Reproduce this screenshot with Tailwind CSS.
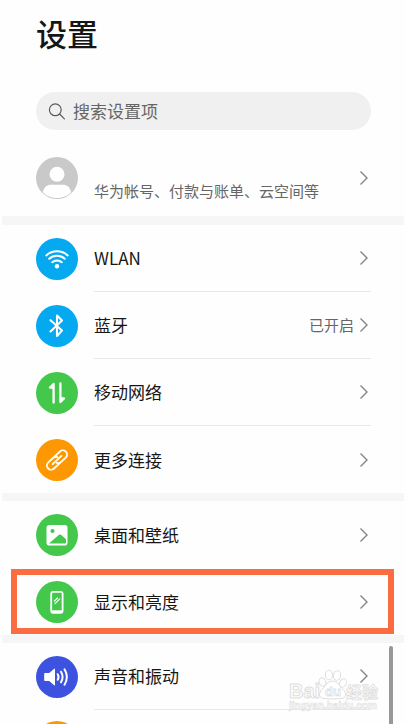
<!DOCTYPE html>
<html lang="zh-CN">
<head>
<meta charset="utf-8">
<meta name="viewport" content="width=device-width, initial-scale=1">
<title>设置</title>
<script src="https://cdn.jsdelivr.net/npm/@tailwindcss/browser@4"></script>
</head>
<body class="bg-white">
<svg class="hidden" aria-hidden="true">
  <symbol id="chevron" viewBox="0 0 10 16"><path d="M1.5 1.5 8 8l-6.5 6.5" fill="none" stroke="#858585" stroke-width="1.4"/></symbol>
</svg>
<div class="relative h-screen overflow-hidden bg-[#fefefe] text-[17px] text-[#161616] font-['Noto_Sans_CJK_SC',sans-serif]">
  <header class="pt-[11px] pl-9 pr-[35px]">
    <h1 class="text-[31px] leading-[44px] font-medium">设置</h1>
    <label class="mt-[37px] flex h-[38px] items-center gap-[7px] rounded-full bg-[#f0f0f0] pl-3">
      <svg class="size-[18px] shrink-0" viewBox="0 0 18 18" fill="none" stroke="#5c5c5c" stroke-width="1.2" stroke-linecap="round" aria-hidden="true"><circle cx="7.3" cy="7.8" r="5.900"/><path d="m11.600 12 4.800 4.800"/></svg>
      <input type="search" aria-label="搜索设置项" placeholder="搜索设置项" class="min-w-0 flex-1 bg-transparent outline-none placeholder:text-[#666]">
    </label>
  </header>
  <main>
    <a href="#account" class="mt-[10px] flex h-[76px] items-center pl-9 pr-[35px]">
      <svg class="size-[42px] shrink-0" viewBox="0 0 42 42" aria-hidden="true"><circle cx="21" cy="21" r="21" fill="#c9c9c9"/><circle cx="21" cy="17.3" r="7.5" fill="#fff"/><path d="M6.8 35.2c1.2-5 4-7.4 8.4-7.4h11.6c4.400 0 7.200 2.400 8.400 7.400A20 20 0 0 1 21 41a20 20 0 0 1-14.200-5.800Z" fill="#fff"/></svg>
      <span class="ml-4 flex-1 pt-[26px] text-[15px] text-[#666]">华为帐号、付款与账单、云空间等</span>
      <svg class="mr-[2px] h-4 w-[10px]"><use href="#chevron"/></svg>
    </a>
    <nav class="mx-[2px] border-t-9 border-[#f6f6f6] pl-[34px] pr-[33px]">
      <a href="#wlan" class="flex h-[67px] items-center">
        <svg class="size-[42px] shrink-0" viewBox="0 0 42 42" aria-hidden="true"><circle cx="21" cy="21" r="21" fill="#05a9f0"/><g fill="none" stroke="#fff" stroke-width="2" stroke-linecap="round"><path d="M10.300 17.400a15.800 15.800 0 0 1 21.400 0"/><path d="M13.200 20.800a11.700 11.700 0 0 1 15.600 0"/><path d="M16.200 24.200a7.300 7.300 0 0 1 9.600 0"/></g><circle cx="21" cy="28.200" r="2.200" fill="#fff"/></svg>
        <span class="ml-4 flex h-full flex-1 items-center justify-between border-b border-[#e8e8e8] pr-[2px]">WLAN<svg class="h-4 w-[10px]"><use href="#chevron"/></svg></span>
      </a>
      <a href="#bluetooth" class="flex h-[67px] items-center">
        <svg class="size-[42px] shrink-0" viewBox="0 0 42 42" aria-hidden="true"><circle cx="21" cy="21" r="21" fill="#05a9f0"/><path d="m14.500 15.200 11.500 10.300-5 5.500V10.500l5 5L14.500 26.500" fill="none" stroke="#fff" stroke-width="2.100" stroke-linecap="round" stroke-linejoin="round"/></svg>
        <span class="ml-4 flex h-full flex-1 items-center border-b border-[#e8e8e8] pr-[2px]">蓝牙<span class="mr-[5px] ml-auto text-[15px] text-[#666]">已开启</span><svg class="h-4 w-[10px]"><use href="#chevron"/></svg></span>
      </a>
      <a href="#mobile" class="flex h-[67px] items-center">
        <svg class="size-[42px] shrink-0" viewBox="0 0 42 42" aria-hidden="true"><circle cx="21" cy="21" r="21" fill="#43c84b"/><path d="M17.600 30.500V12l-3.600 3.500h3M24.400 11.500V30l3.600-3.500h-3" fill="none" stroke="#fff" stroke-width="2.300" stroke-linecap="round" stroke-linejoin="round"/></svg>
        <span class="ml-4 flex h-full flex-1 items-center justify-between border-b border-[#e8e8e8] pr-[2px]">移动网络<svg class="h-4 w-[10px]"><use href="#chevron"/></svg></span>
      </a>
      <a href="#connections" class="flex h-[67px] items-center">
        <svg class="size-[42px] shrink-0" viewBox="0 0 42 42" aria-hidden="true"><circle cx="21" cy="21" r="21" fill="#fd9803"/><g transform="rotate(-43 21 21)" fill="none" stroke="#fff" stroke-width="1.900" stroke-linecap="round"><path d="M20.500 25.200H13a4.200 4.200 0 0 1 0-8.400h6.500a4.200 4.200 0 0 1 3.700 2.200"/><path d="M21.500 16.800H29a4.200 4.200 0 0 1 0 8.400h-6.500a4.200 4.200 0 0 1-3.700-2.200"/><path d="M15 21h12"/></g></svg>
        <span class="ml-4 flex h-full flex-1 items-center justify-between pr-[2px]">更多连接<svg class="h-4 w-[10px]"><use href="#chevron"/></svg></span>
      </a>
    </nav>
    <nav class="mx-[2px] border-t-8 border-[#f6f6f6] pl-[34px] pr-[33px]">
      <a href="#wallpaper" class="flex h-[67px] items-center">
        <svg class="size-[42px] shrink-0" viewBox="0 0 42 42" aria-hidden="true"><circle cx="21" cy="21" r="21" fill="#43c84b"/><rect x="10.500" y="11" width="21" height="20.500" rx="2.800" fill="#fff"/><circle cx="16.500" cy="17" r="2.100" fill="#43c84b"/><path d="m13 29.500 10-8.700q1-.8 2 0l5 4.500v3.200q0 1-1 1Z" fill="#43c84b"/></svg>
        <span class="ml-4 flex h-full flex-1 items-center justify-between pr-[2px]">桌面和壁纸<svg class="h-4 w-[10px]"><use href="#chevron"/></svg></span>
      </a>
      <a href="#display" class="relative flex h-[67px] items-center">
        <svg class="size-[42px] shrink-0" viewBox="0 0 42 42" aria-hidden="true"><circle cx="21" cy="21" r="21" fill="#43c84b"/><rect x="15.200" y="10.800" width="11.400" height="21" rx="2" fill="none" stroke="#fff" stroke-width="1.800"/><path d="M15.200 30.500h11.400" stroke="#fff" stroke-width="2.400"/><path d="m18.300 20.200 3.200-3.200m-2.500 5.600 4.800-4.800" stroke="#fff" stroke-width="1.200" stroke-linecap="round"/></svg>
        <span class="ml-4 flex h-full flex-1 items-center justify-between pr-[2px]">显示和亮度<svg class="h-4 w-[10px]"><use href="#chevron"/></svg></span>
        <span class="absolute -left-[25px] -right-[23px] top-px bottom-px border-[6px] border-[#fb6c41]"></span>
      </a>
    </nav>
    <nav class="mx-[2px] border-t-8 border-[#f6f6f6] pl-[34px] pr-[33px]">
      <a href="#sound" class="flex h-[67px] items-center">
        <svg class="size-[42px] shrink-0" viewBox="0 0 42 42" aria-hidden="true"><circle cx="21" cy="21" r="21" fill="#3d53e0"/><path d="M9 17h4.200l5-4.300q.8-.6.800.4v15.800q0 1-.8.400l-5-4.300H9q-.8 0-.8-.8v-6.400q0-.8.800-.8Z" fill="#fff"/><g fill="none" stroke="#fff" stroke-width="2" stroke-linecap="round"><path d="M21.700 18.200q1.700 2.800 0 5.600M25 15.700q3.200 5.300 0 10.600M28.500 13.300q4.700 7.700 0 15.400"/></g></svg>
        <span class="ml-4 flex h-full flex-1 items-center justify-between border-b border-[#e8e8e8] pr-[2px]">声音和振动<svg class="h-4 w-[10px]"><use href="#chevron"/></svg></span>
      </a>
      <a href="#more" aria-label="更多" class="flex h-16 items-center">
        <svg class="size-[42px] shrink-0" viewBox="0 0 42 42" aria-hidden="true"><circle cx="21" cy="21" r="21" fill="#fd9803"/></svg>
      </a>
    </nav>
  </main>
  <svg class="pointer-events-none absolute right-[26px] bottom-[6px] h-[50px] w-[92px] font-['Liberation_Sans','Noto_Sans_CJK_SC',sans-serif]" viewBox="0 0 92 50" aria-label="Baidu经验">
    <g fill="#fff" fill-opacity=".8" stroke="#dedede" stroke-width="1">
      <ellipse cx="34.500" cy="14" rx="3.200" ry="4.300" transform="rotate(-25 34.500 14)"/>
      <ellipse cx="41" cy="7" rx="3.600" ry="4.800"/>
      <ellipse cx="49" cy="7.500" rx="3.600" ry="4.800" transform="rotate(12 49 7.500)"/>
      <ellipse cx="55" cy="15" rx="3.200" ry="4.300" transform="rotate(25 55 15)"/>
      <path d="M38 16q6.500-6 13 0 2 4 5 6.500 4 6-2 8-10 1-19 0-6-2-2-8 3-2.500 5-6.500Z"/>
      <g font-weight="bold" stroke-linejoin="round">
        <text x="1" y="30" font-size="20">Bai</text>
        <text x="37" y="28" font-size="13" stroke-width=".8">du</text>
        <text x="58" y="30" font-size="16" stroke-width=".8">经验</text>
        <text x="1" y="41" font-size="10" stroke-width=".6">jingyan.baidu.com</text>
      </g>
    </g>
  </svg>
  <span class="absolute top-[646px] right-[13px] bottom-0 w-1 rounded-t-full bg-[#989898]"></span>
</div>
</body>
</html>
